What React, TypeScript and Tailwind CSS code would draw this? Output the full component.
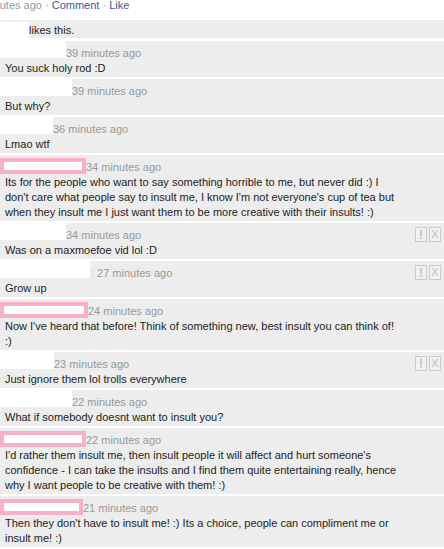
import React from "react";

type Row = {
  box: number;
  pink?: boolean;
  time: string;
  pre?: string;
  lines: string[];
  icons?: boolean;
};

const rows: Row[] = [
  { box: 66, time: "39 minutes ago", lines: ["You suck holy rod :D"] },
  { box: 72, time: "39 minutes ago", lines: ["But why?"] },
  { box: 53, time: "36 minutes ago", lines: ["Lmao wtf"] },
  {
    box: 86,
    pink: true,
    time: "34 minutes ago",
    lines: [
      "Its for the people who want to say something horrible to me, but never did :) I",
      "don't care what people say to insult me, I know I'm not everyone's cup of tea but",
      "when they insult me I just want them to be more creative with their insults! :)",
    ],
  },
  { box: 66, time: "34 minutes ago", lines: ["Was on a maxmoefoe vid lol :D"], icons: true },
  { box: 90, time: "27 minutes ago", pre: ":", lines: ["Grow up"], icons: true },
  {
    box: 88,
    pink: true,
    time: "24 minutes ago",
    lines: [
      "Now I've heard that before! Think of something new, best insult you can think of!",
      ":)",
    ],
  },
  { box: 54, time: "23 minutes ago", lines: ["Just ignore them lol trolls everywhere"], icons: true },
  { box: 72, time: "22 minutes ago", lines: ["What if somebody doesnt want to insult you?"] },
  {
    box: 86,
    pink: true,
    time: "22 minutes ago",
    lines: [
      "I'd rather them insult me, then insult people it will affect and hurt someone's",
      "confidence - I can take the insults and I find them quite entertaining really, hence",
      "why I want people to be creative with them! :)",
    ],
  },
  {
    box: 83,
    pink: true,
    time: "21 minutes ago",
    lines: [
      "Then they don't have to insult me! :) Its a choice, people can compliment me or",
      "insult me! :)",
    ],
  },
];

function Icons() {
  return (
    <div className="ml-auto mr-[3px] mt-[4px] flex gap-[2px] self-start">
      <div className="flex h-[15px] w-[12px] items-center justify-center border border-[#cccccc] bg-[#f1f1f1] text-[12px] font-bold leading-none text-[#c0c0c0]">
        !
      </div>
      <div className="flex h-[15px] w-[12px] items-center justify-center border border-[#cccccc] bg-[#f1f1f1] text-[11px] leading-none text-[#c0c0c0]">
        X
      </div>
    </div>
  );
}

function Comment({ r }: { r: Row }) {
  return (
    <div className="mb-[2px] bg-[#ededed] pb-[1px]">
      <div className="flex h-[20px]">
        {r.pink ? (
          <div className="mt-[3px] h-[16px] shrink-0 border-4 border-[#f6b0c9] bg-white" style={{ width: r.box }} />
        ) : (
          <div className="h-[17px] shrink-0 bg-white" style={{ width: r.box }} />
        )}
        {r.pre && <span className="mt-[4px] pl-[1px] pr-[3px] text-[11px] leading-[16px] text-[#c8c8c8]">{r.pre}</span>}
        <span className="mt-[4px] whitespace-nowrap text-[11px] leading-[16px] text-[#999999]">{r.time}</span>
        {r.icons && <Icons />}
      </div>
      <div className="pl-[5px] text-[11px] leading-[15px] text-[#222222]">
        {r.lines.map((l, i) => (
          <div key={i} className="whitespace-nowrap">
            {l}
          </div>
        ))}
      </div>
    </div>
  );
}

export default function App() {
  return (
    <div
      className="h-[549px] w-[444px] overflow-hidden bg-white"
      style={{ fontFamily: '"Liberation Sans", Arial, sans-serif' }}
    >
      <div className="h-[20px] overflow-hidden">
        <div className="-ml-[18px] -mt-[2px] whitespace-nowrap text-[11px] leading-[14px]">
          <span className="text-[#999999]">minutes ago · </span>
          <span className="text-[#3b5998]">Comment</span>
          <span className="text-[#999999]"> · </span>
          <span className="text-[#3b5998]">Like</span>
        </div>
      </div>
      <div className="mb-[3px] flex h-[18px] bg-[#ededed]">
        <div className="mt-[2px] h-[16px] w-[29px] bg-white" />
        <span className="mt-[3px] text-[11px] leading-[15px] text-[#222222]">likes this.</span>
      </div>
      {rows.map((r, i) => (
        <Comment key={i} r={r} />
      ))}
    </div>
  );
}
